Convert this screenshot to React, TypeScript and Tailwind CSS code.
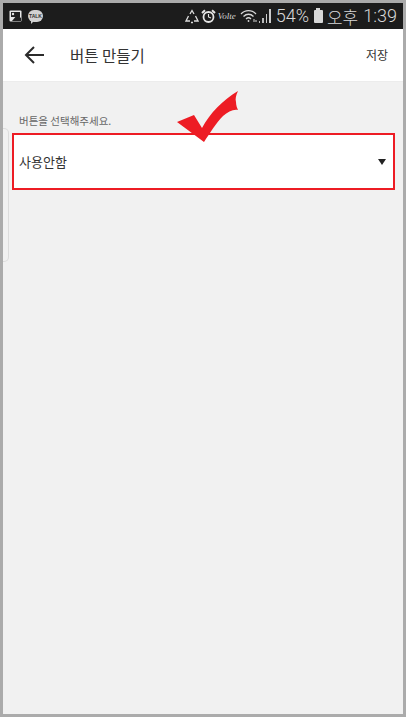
const KR = "font-['Noto_Sans_CJK_KR','Noto_Sans',sans-serif]";

function PhotoIcon() {
  return (
    <svg width="13" height="12" viewBox="0 0 13 12">
      <rect x="0.5" y="0.5" width="12" height="11" rx="1" fill="#e8e8e8" />
      <rect x="2" y="2" width="9" height="5" fill="#222" />
      <circle cx="4" cy="4" r="1.2" fill="#e8e8e8" />
      <path d="M3 11 L8 5 L12 8 V11 Z" fill="#222" />
    </svg>
  );
}

function TalkIcon() {
  return (
    <div className="relative flex h-[12px] w-[15px] items-center justify-center rounded-full bg-[#d2d2d2]">
      <span className="font-['Liberation_Sans',sans-serif] text-[5px] leading-none font-bold text-[#333]">TALK</span>
      <span className="absolute bottom-[-2px] left-[3px] h-0 w-0 border-t-[3px] border-r-[3px] border-t-[#d2d2d2] border-r-transparent" />
    </div>
  );
}

function RecycleIcon() {
  return (
    <svg width="14" height="15" viewBox="0 0 14 15" fill="none" stroke="#dcdcdc" strokeWidth="1.3">
      <path d="M5 5 L7 1.5 L9 5" />
      <path d="M10.5 7 L13 12 H9" />
      <path d="M3.5 7 L1 12 H5" />
      <path d="M6 13.5 H8" />
    </svg>
  );
}

function AlarmIcon() {
  return (
    <svg width="15" height="14" viewBox="0 0 15 14" fill="none">
      <circle cx="7.5" cy="8" r="5" stroke="#e4e4e4" strokeWidth="1.8" />
      <path d="M7.5 5 V8 L10 9" stroke="#e4e4e4" strokeWidth="1.1" />
      <path d="M1 4 L4 1.2 M14 4 L11 1.2" stroke="#e4e4e4" strokeWidth="2" />
    </svg>
  );
}

function WifiIcon() {
  return (
    <svg width="18" height="14" viewBox="0 0 18 14" fill="none" stroke="#d8d8d8" strokeWidth="1.3">
      <path d="M1 5 C5 0.5 12 0.5 16 5" />
      <path d="M3.5 7.5 C6.5 4.5 10.5 4.5 13.5 7.5" />
      <path d="M6 10 C7.5 8.5 9.5 8.5 11 10" />
      <circle cx="8.5" cy="12" r="0.9" fill="#d8d8d8" stroke="none" />
      <path d="M14 10 V13 M16 11 V13" strokeWidth="1" />
    </svg>
  );
}

function SignalIcon() {
  return (
    <div className="flex h-[14px] items-end gap-[2px]">
      <span className="h-[2px] w-[1.5px] bg-[#bbb]" />
      <span className="h-[5px] w-[1.5px] bg-[#bbb]" />
      <span className="h-[9px] w-[1.5px] bg-[#ccc]" />
      <span className="h-[14px] w-[1.5px] bg-[#ccc]" />
    </div>
  );
}

function StatusBar() {
  return (
    <div className="flex h-[26px] shrink-0 items-center bg-[#1c1c1c] pr-[6px] pl-[6px]">
      <div className="flex items-center gap-[6px]">
        <PhotoIcon />
        <TalkIcon />
      </div>
      <div className="ml-auto flex items-center text-[#d8d8d8]">
        <RecycleIcon />
        <span className="ml-[2px]"><AlarmIcon /></span>
        <span className="ml-[2px] w-[19px] font-['Liberation_Serif',serif] text-[9px] leading-none italic">Volte</span>
        <span className="ml-[3px]"><WifiIcon /></span>
        <span className="ml-[1px]"><SignalIcon /></span>
        <span className="ml-[5px] font-['Roboto',sans-serif] text-[18px] leading-none font-light">54%</span>
        <span className="relative ml-[5px] h-[13px] w-[9px] rounded-[1px] bg-[#d8d8d8]">
          <span className="absolute top-[-1.5px] left-[2.5px] h-[2px] w-[4px] bg-[#d8d8d8]" />
        </span>
        <span className={`ml-[4px] text-[17px] leading-none font-light ${KR}`}>오후</span>
        <span className="ml-[5px] font-['Roboto',sans-serif] text-[18px] leading-none font-light">1:39</span>
      </div>
    </div>
  );
}

function Header() {
  return (
    <div className="flex h-[53px] shrink-0 items-center border-b border-[#ececec] bg-white pr-[15px] pl-[21px]">
      <svg width="20" height="18" viewBox="0 0 20 18" fill="none" stroke="#2b2b2b" strokeWidth="2">
        <path d="M20 9 H2" />
        <path d="M10 1 L2 9 L10 17" />
      </svg>
      <span className={`mt-[1px] ml-[26px] text-[15.5px] leading-none text-[#333] ${KR}`}>버튼 만들기</span>
      <span className={`ml-auto text-[12px] leading-none text-[#333] ${KR}`}>저장</span>
    </div>
  );
}

export default function App() {
  return (
    <div className="relative flex h-[717px] w-[406px] flex-col border-[3px] border-[#ababab] bg-[#f1f1f1]">
      <StatusBar />
      <Header />
      <div className="flex flex-1 flex-col pt-[32px] pr-[8px] pl-[9px]">
        <p className={`ml-[7px] text-[10.5px] leading-[14px] text-[#666] ${KR}`}>버튼을 선택해주세요.</p>
        <div className="mt-[5px] flex h-[57px] items-center justify-between border-2 border-[#ed1c24] bg-white pr-[7px] pl-[5px]">
          <span className={`text-[13px] leading-none text-[#333] ${KR}`}>사용안함</span>
          <span className="h-0 w-0 border-t-[6px] border-r-[4.5px] border-l-[4.5px] border-t-[#222] border-r-transparent border-l-transparent" />
        </div>
      </div>
      {/* faint card edge behind the page */}
      <div className="absolute top-[125px] left-0 h-[134px] w-[6px] rounded-r-[5px] border border-l-0 border-[#dcdcdc]" />
      {/* hand-drawn check mark annotation */}
      <svg className="absolute top-[82px] left-[168px]" width="70" height="60" viewBox="0 0 70 60">
        <path d="M6 37 L23 30 L31 43 C39 28 52 15 67 6 C65 10 64 14 65 17 C65 20 66 23 67 25 C62 24 57 27 52 31 C45 38 39 48 33 57 Z" fill="#ed1c24" />
      </svg>
    </div>
  );
}
